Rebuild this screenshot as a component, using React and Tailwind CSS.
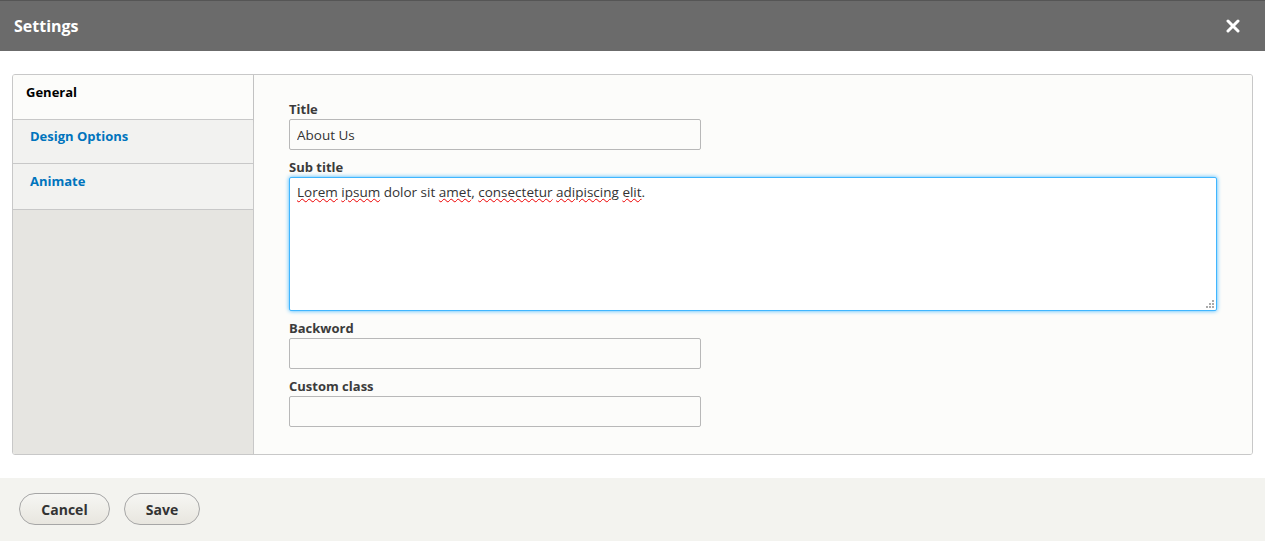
import React from "react";

const Field = ({ label, children }) => (
  <div className="flex flex-col">
    <label className="text-[13px] font-bold text-[#3b3b3b] leading-[16px] mb-[2px]">{label}</label>
    {children}
  </div>
);

const Misspelled = ({ children }) => (
  <span className="underline decoration-wavy decoration-[#e00] decoration-1">{children}</span>
);

const App = () => {
  return (
    <div className="w-[1265px] h-[541px] bg-white flex flex-col font-['Open_Sans',sans-serif]">
      {/* Header */}
      <div className="h-[51px] bg-[#6b6b6b] border-t border-[#555] flex items-center justify-between pl-[14px] pr-[25px]">
        <h1 className="text-white font-bold text-[16px]">Settings</h1>
        <button className="text-white">
          <svg width="14" height="14" viewBox="0 0 14 14">
            <path d="M2 2 L12 12 M12 2 L2 12" stroke="white" strokeWidth="3" strokeLinecap="round" />
          </svg>
        </button>
      </div>

      {/* Body */}
      <div className="flex-1 px-[12px] pt-[23px] pb-[23px]">
        <div className="flex h-[381px] border border-[#c8c8c8] rounded-[3px] overflow-hidden">
          {/* Tabs */}
          <div className="w-[241px] bg-[#e6e5e1] border-r border-[#c8c8c8] flex flex-col">
            <div className="h-[45px] bg-[#fcfcfa] border-b border-[#c8c8c8] pl-[13px] pt-[8px] text-[13px] font-bold text-black shadow-[0_1px_3px_rgba(0,0,0,0.08)]">
              General
            </div>
            <div className="h-[44px] bg-[#f2f2f0] border-b border-[#c8c8c8] pl-[17px] pt-[7px] text-[13px] font-bold text-[#0074bd]">
              Design Options
            </div>
            <div className="h-[46px] bg-[#f2f2f0] border-b border-[#c8c8c8] pl-[17px] pt-[8px] text-[13px] font-bold text-[#0074bd]">
              Animate
            </div>
          </div>

          {/* Form */}
          <div className="flex-1 bg-[#fcfcfa] px-[35px] pt-[26px] flex flex-col gap-[9px]">
            <Field label="Title">
              <input
                defaultValue="About Us"
                className="w-[412px] h-[31px] border border-[#b8b8b8] rounded-[2px] bg-[#fcfcfa] px-[7px] text-[13.5px] text-[#333] outline-none"
              />
            </Field>
            <Field label="Sub title">
              <div className="relative w-[928px] h-[134px] border border-[#40b6ff] rounded-[2px] bg-white shadow-[0_0_4px_#40b6ff] px-[7px] pt-[4px] text-[13.5px] text-[#333]">
                <Misspelled>Lorem</Misspelled> <Misspelled>ipsum</Misspelled> dolor sit{" "}
                <Misspelled>amet</Misspelled>, <Misspelled>consectetur</Misspelled>{" "}
                <Misspelled>adipiscing</Misspelled> <Misspelled>elit</Misspelled>.
                <svg className="absolute right-[2px] bottom-[2px]" width="8" height="8" viewBox="0 0 8 8">
                  <rect x="6" y="0" width="2" height="2" fill="#aaa" />
                  <rect x="3" y="3" width="2" height="2" fill="#aaa" />
                  <rect x="6" y="3" width="2" height="2" fill="#aaa" />
                  <rect x="0" y="6" width="2" height="2" fill="#aaa" />
                  <rect x="3" y="6" width="2" height="2" fill="#aaa" />
                  <rect x="6" y="6" width="2" height="2" fill="#aaa" />
                </svg>
              </div>
            </Field>
            <Field label="Backword">
              <input className="w-[412px] h-[31px] border border-[#b8b8b8] rounded-[2px] bg-[#fcfcfa] px-[7px] text-[13.5px] outline-none" />
            </Field>
            <Field label="Custom class">
              <input className="w-[412px] h-[31px] border border-[#b8b8b8] rounded-[2px] bg-[#fcfcfa] px-[7px] text-[13.5px] outline-none" />
            </Field>
          </div>
        </div>
      </div>

      {/* Footer */}
      <div className="h-[63px] bg-[#f3f3ef] flex items-center gap-[14px] pl-[19px] pb-[1px]">
        <button className="h-[32px] w-[91px] rounded-full border border-[#a6a6a6] bg-gradient-to-b from-[#f6f6f3] to-[#e8e6df] text-[14px] font-bold text-[#333]">
          Cancel
        </button>
        <button className="h-[32px] w-[76px] rounded-full border border-[#a6a6a6] bg-gradient-to-b from-[#f6f6f3] to-[#e8e6df] text-[14px] font-bold text-[#333]">
          Save
        </button>
      </div>
    </div>
  );
};

export default App;
